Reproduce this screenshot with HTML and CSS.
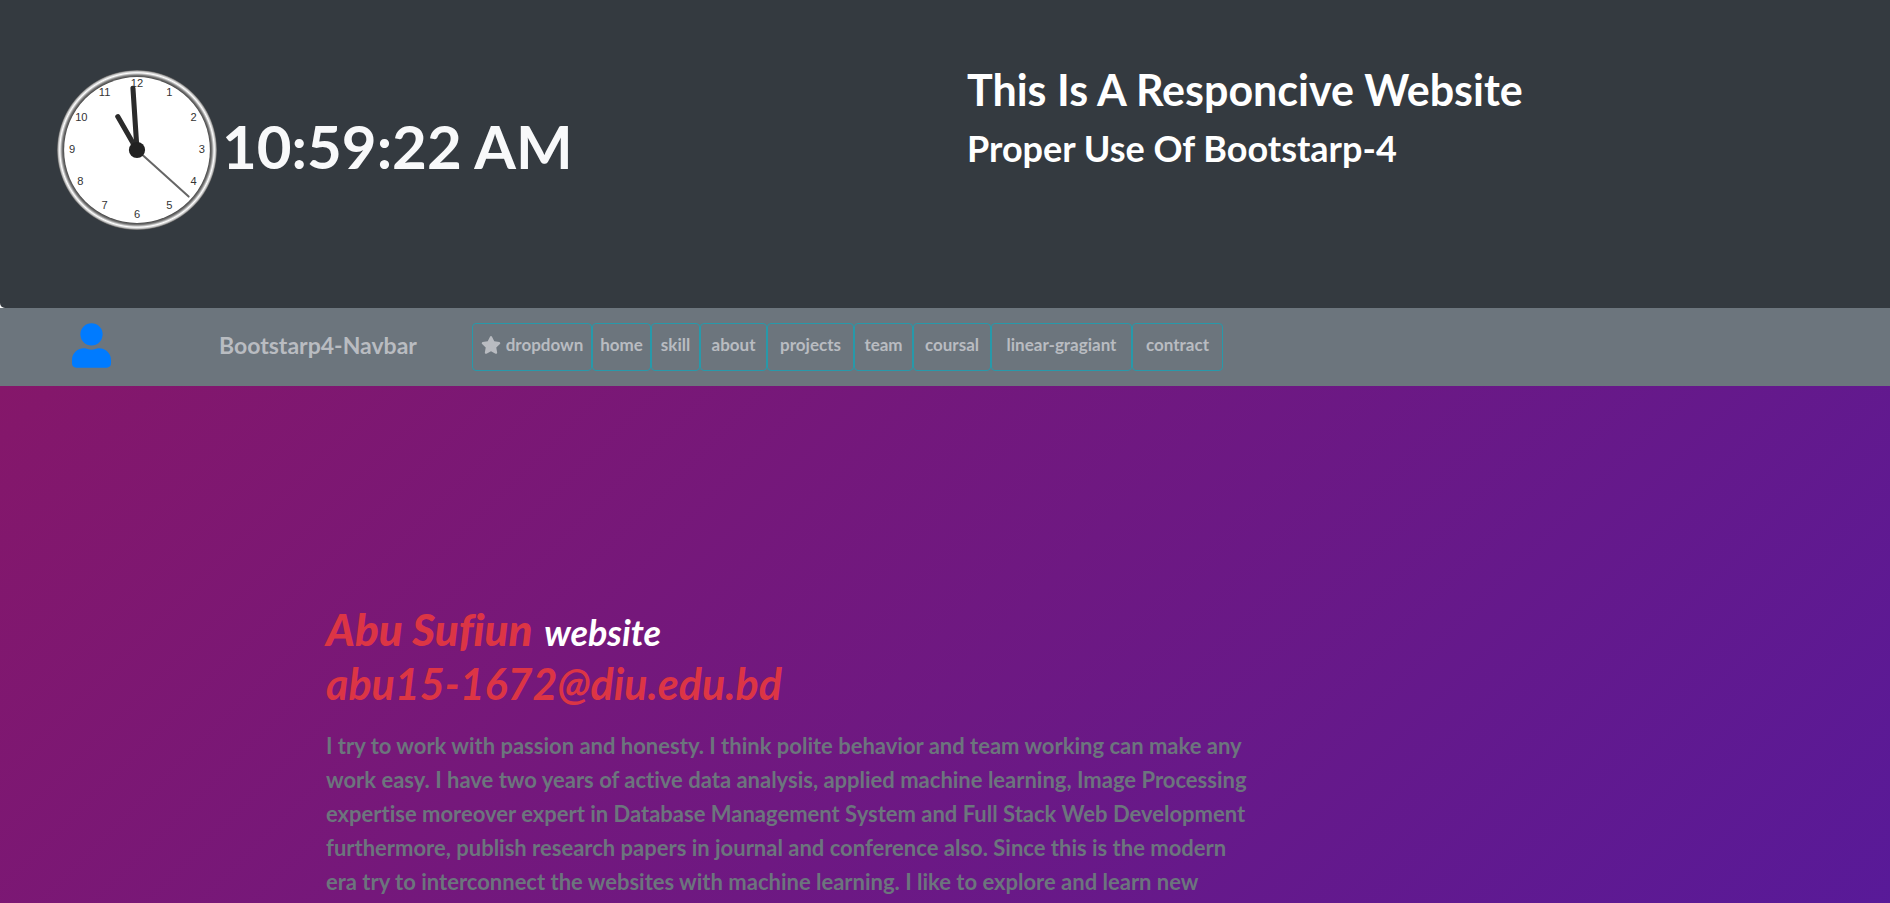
FILE: index.html
```html
<!DOCTYPE html>
<html lang="en">
<head>
<meta charset="utf-8">
<meta name="viewport" content="width=device-width, initial-scale=1">
<title>Abu Sufiun</title>
<link rel="stylesheet" href="styles.css">
</head>
<body>
<header class="banner">
  <div class="clock-box">
    <svg class="clock" viewBox="0 0 160 160" role="img" aria-label="Clock">
      <defs>
        <radialGradient id="rim" gradientUnits="userSpaceOnUse" cx="80" cy="80" r="79">
          <stop offset="0.91" stop-color="#444"/>
          <stop offset="0.935" stop-color="#777"/>
          <stop offset="0.965" stop-color="#fff"/>
          <stop offset="0.985" stop-color="#bbb"/>
          <stop offset="1" stop-color="#555"/>
        </radialGradient>
      </defs>
      <circle cx="80" cy="80" r="79" fill="url(#rim)"/>
      <circle cx="80" cy="80" r="72" fill="#fff"/>
      <g class="clock-numbers">
        <text x="80" y="18">12</text><text x="112" y="27">1</text><text x="136" y="51">2</text>
        <text x="144" y="83">3</text><text x="136" y="115">4</text><text x="112" y="138">5</text>
        <text x="80" y="147">6</text><text x="48" y="138">7</text><text x="24" y="115">8</text>
        <text x="16" y="83">9</text><text x="25" y="51">10</text><text x="48" y="27">11</text>
      </g>
      <g stroke="#2b2b2b" stroke-linecap="round">
        <path d="M80 80L61 47" stroke-width="5"/>
        <path d="M80 80L76 19" stroke-width="5"/>
        <path d="M80 80L131 126" stroke="#666" stroke-width="2"/>
      </g>
      <circle cx="80" cy="80" r="8" fill="#222"/>
    </svg>
    <h1 class="time">10:59:22 AM</h1>
  </div>
  <div class="titles">
    <h1 class="title">This Is A Responcive Website</h1>
    <h2 class="subtitle">Proper Use Of Bootstarp-4</h2>
  </div>
</header>
<nav class="navbar">
  <a class="user" href="#" aria-label="User">
    <svg viewBox="0 0 448 512"><path fill="currentColor" d="M224 256a128 128 0 1 0 0-256 128 128 0 0 0 0 256zm90 32h-17a174 174 0 0 1-146 0h-17C60 288 0 348 0 422v42c0 27 21 48 48 48h352c27 0 48-21 48-48v-42c0-74-60-134-134-134z"/></svg>
  </a>
  <a class="brand" href="#">Bootstarp4-Navbar</a>
  <ul class="menu">
    <li><a href="#"><svg class="star" viewBox="0 0 576 512"><path fill="currentColor" d="M259 18l-65 131-146 22c-26 4-36 36-17 55l105 102-25 145c-4 26 23 46 46 34l131-69 131 69c23 12 50-8 46-34l-25-145 105-102c19-19 9-51-17-55l-146-22-65-131c-12-24-46-24-58 0z"/></svg>dropdown</a></li>
    <li><a href="#">home</a></li>
    <li><a href="#">skill</a></li>
    <li><a href="#">about</a></li>
    <li><a href="#">projects</a></li>
    <li><a href="#">team</a></li>
    <li><a href="#">coursal</a></li>
    <li><a href="#">linear-gragiant</a></li>
    <li><a href="#">contract</a></li>
  </ul>
</nav>
<main class="hero">
  <section class="intro">
    <h1 class="name"><b>Abu Sufiun</b> <small>website</small></h1>
    <p class="email">abu15-1672@diu.edu.bd</p>
    <p class="about">I try to work with passion and honesty. I think polite behavior and team working can make any<br> work easy. I have two years of active data analysis, applied machine learning, Image Processing<br> expertise moreover expert in Database Management System and Full Stack Web Development<br> furthermore, publish research papers in journal and conference also. Since this is the modern<br> era try to interconnect the websites with machine learning. I like to explore and learn new</p>
  </section>
</main>
</body>
</html>
```
FILE: styles.css
```css
* { box-sizing: border-box; }
html { height: 100%; }
body {
  margin: 0;
  min-height: 100%;
  display: flex;
  flex-direction: column;
  background: #fff;
  color: #fff;
  font-family: Lato, "Open Sans", sans-serif;
  font-variant-ligatures: none;
}
h1, h2, p, ul { margin: 0; padding: 0; }
a { text-decoration: none; }
.banner {
  display: grid;
  grid-template-columns: 1fr 1fr;
  padding: 64px 56px 72px;
  background: #343a40;
  border-bottom-left-radius: 5px;
}
.clock-box { display: flex; align-items: center; gap: 4px; height: 172px; }
.clock { width: 162px; height: 162px; }
.clock-numbers { font: 11px "Liberation Sans", Arial, sans-serif; fill: #333; text-anchor: middle; }
.time { padding-bottom: 8px; color: #f8f9fa; font-size: 60px; line-height: 72px; font-weight: 700; }
.titles { padding-left: 22px; }
.title { font-size: 43px; line-height: 52px; font-weight: 700; }
.subtitle { margin-top: 8px; font-size: 36px; line-height: 48px; font-weight: 700; }
.navbar {
  display: flex;
  align-items: center;
  height: 78px;
  padding-left: 72px;
  background: #6c757d;
}
.user { width: 39px; height: 45px; margin: 0 108px 4px 0; color: #007bff; }
.user svg { display: block; width: 100%; height: 100%; }
.brand { width: 253px; padding-bottom: 4px; color: #b9bcc1; font-size: 23px; line-height: 32px; font-weight: 700; }
.menu {
  display: grid;
  grid-template-columns: 120px 59px 49px 67px 87px 59px 78px 141px 91px;
  list-style: none;
}
.menu a {
  display: flex;
  align-items: center;
  justify-content: center;
  height: 48px;
  padding-bottom: 4px;
  border: 1px solid #2799aa;
  border-radius: 4px;
  color: #b9bcc1;
  font-size: 17px;
  line-height: 24px;
  font-weight: 700;
}
.star { width: 20px; height: 18px; margin-right: 5px; }
.hero { flex: 1; background: linear-gradient(135deg, #85176a, #551a9c 108%); }
.intro { padding: 216px 0 0 326px; }
.name { color: #dc3545; font-size: 44px; line-height: 54px; font-style: italic; }
.name small { color: #fff; font-size: 36px; font-weight: 700; margin-left: 2px; }
.email { color: #dc3545; font-size: 43px; line-height: 50px; font-style: italic; font-weight: 700; }
.about { margin-top: 20px; color: #6c757d; font-size: 22px; line-height: 34px; font-weight: 700; white-space: nowrap; }
```
